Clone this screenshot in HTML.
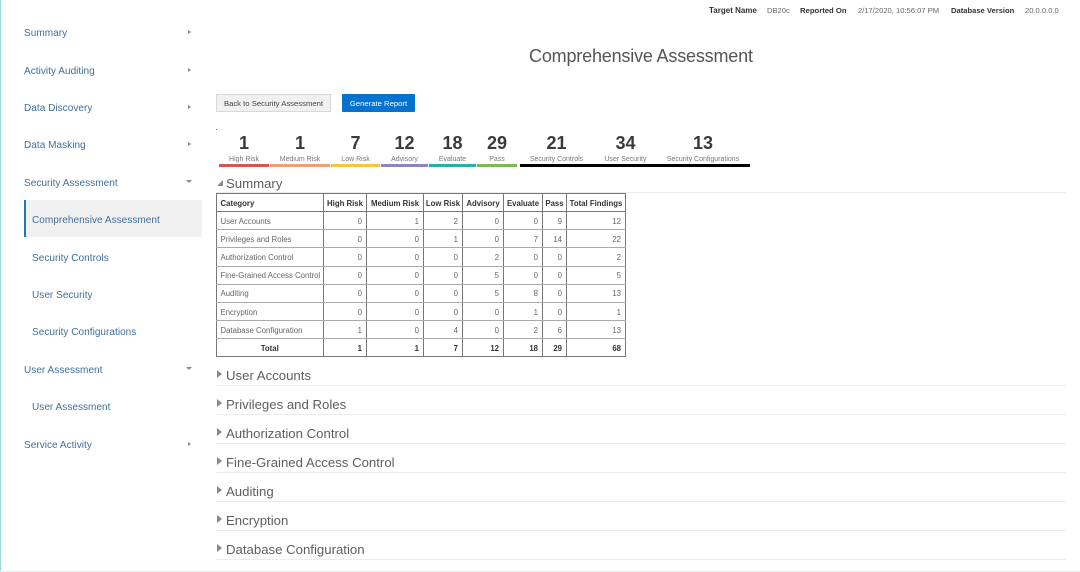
<!DOCTYPE html>
<html><head><meta charset="utf-8"><style>
html,body{margin:0;padding:0;width:1080px;height:572px;overflow:hidden;background:#fff;font-family:"Liberation Sans",sans-serif;}
.a{position:absolute;white-space:nowrap}
.nav{position:absolute;color:#3f6f9e;line-height:14px;white-space:nowrap;font-family:"Liberation Sans",sans-serif;font-size:10.05px;letter-spacing:.02px;margin-top:1px}
.ar{position:absolute;left:187.5px;width:0;height:0;margin-top:.5px;border-left:3.5px solid #888;border-top:2.5px solid transparent;border-bottom:2.5px solid transparent}
.dn{position:absolute;left:186px;width:0;height:0;border-top:3.5px solid #888;border-left:3px solid transparent;border-right:3px solid transparent}
.n{position:absolute;top:133px;font:bold 18px/20px "Liberation Sans",sans-serif;color:#3a3a3a;text-align:center}
.l{position:absolute;top:155px;font:7px/9px "Liberation Sans",sans-serif;color:#777;text-align:center;white-space:nowrap}
.b{position:absolute;top:164px;height:3px}
.h{position:absolute;left:226px;font:13.2px/18px "Liberation Sans",sans-serif;color:#5e5e5e;white-space:nowrap}
.t{position:absolute;left:217px;width:0;height:0;border-left:5px solid #888;border-top:4px solid transparent;border-bottom:4px solid transparent}
.r{position:absolute;left:216px;width:850px;height:1px;background:#ececec}
table{position:absolute;left:216px;top:193px;border-collapse:collapse;table-layout:fixed;width:409px;font:7.8px "Liberation Sans",sans-serif;color:#666}
td,th{border:1px solid #777;border-top-color:#aaa;border-bottom-color:#aaa;padding:1px 4px 0;text-align:right;height:18.17px;box-sizing:border-box;white-space:nowrap;overflow:hidden}
th{color:#333;font-weight:bold;text-align:center;padding:1px 1px 0;border-color:#777}
td:first-child,th:first-child{text-align:left;padding-left:3.5px}
tr.tot td{font-weight:bold;color:#333;border-color:#777}
tr.tot td:first-child{text-align:center}
</style></head><body>
<div class="a" style="left:0;top:0;width:1px;height:572px;background:#9adbd6"></div>
<div class="a" style="left:0;top:571px;width:1080px;height:1px;background:#e4ecec"></div>

<div class="nav" style="top:26px;left:24px">Summary</div><div class="ar" style="top:29.5px"></div>
<div class="nav" style="top:64px;left:24px">Activity Auditing</div><div class="ar" style="top:67px"></div>
<div class="nav" style="top:101px;left:24px">Data Discovery</div><div class="ar" style="top:104.5px"></div>
<div class="nav" style="top:138px;left:24px">Data Masking</div><div class="ar" style="top:141.5px"></div>
<div class="nav" style="top:176px;left:24px">Security Assessment</div><div class="dn" style="top:180px"></div>
<div class="a" style="left:24px;top:200px;width:178px;height:37px;background:#f0f0f0"></div>
<div class="a" style="left:24px;top:200px;width:2px;height:37px;background:#1b78c0"></div>
<div class="nav" style="top:213px;left:32px">Comprehensive Assessment</div>
<div class="nav" style="top:251px;left:32px">Security Controls</div>
<div class="nav" style="top:288px;left:32px">User Security</div>
<div class="nav" style="top:325px;left:32px">Security Configurations</div>
<div class="nav" style="top:363px;left:24px">User Assessment</div><div class="dn" style="top:367px"></div>
<div class="nav" style="top:400px;left:32px">User Assessment</div>
<div class="nav" style="top:438px;left:24px">Service Activity</div><div class="ar" style="top:441px"></div>

<div class="a" style="top:5px;left:709px;font:bold 8px/11px 'Liberation Sans',sans-serif;color:#333">Target Name</div>
<div class="a" style="top:5px;left:767px;font:7.6px/11px 'Liberation Sans',sans-serif;color:#666">DB20c</div>
<div class="a" style="top:5px;left:800px;font:bold 7.7px/11px 'Liberation Sans',sans-serif;color:#333">Reported On</div>
<div class="a" style="top:5px;left:858px;font:7.6px/11px 'Liberation Sans',sans-serif;color:#666">2/17/2020, 10:56:07 PM</div>
<div class="a" style="top:5px;left:951px;font:bold 7.6px/11px 'Liberation Sans',sans-serif;color:#333">Database Version</div>
<div class="a" style="top:5px;left:1025px;font:7.6px/11px 'Liberation Sans',sans-serif;color:#666">20.0.0.0.0</div>

<div class="a" style="top:44px;left:529px;font:18px/25px 'Liberation Sans',sans-serif;letter-spacing:-.18px;color:#555">Comprehensive Assessment</div>

<div class="a" style="left:216px;top:94px;width:115px;height:18px;box-sizing:border-box;background:#f1f1f1;border:1px solid #d8d8d8;font:7.7px/17px 'Liberation Sans',sans-serif;color:#444;text-align:center">Back to Security Assessment</div>
<div class="a" style="left:342px;top:94px;width:73px;height:18px;background:#0572ce;border-radius:1px;font:7.7px/19px 'Liberation Sans',sans-serif;color:#fff;text-align:center">Generate Report</div>
<div class="a" style="left:216px;top:129px;width:1px;height:1px;background:#777"></div>

<div class="n" style="left:219px;width:50px">1</div><div class="l" style="left:219px;width:50px">High Risk</div><div class="b" style="left:219px;width:50px;background:#d9534f"></div>
<div class="n" style="left:270px;width:60px">1</div><div class="l" style="left:270px;width:60px">Medium Risk</div><div class="b" style="left:270px;width:60px;background:#f0a070"></div>
<div class="n" style="left:331px;width:49px">7</div><div class="l" style="left:331px;width:49px">Low Risk</div><div class="b" style="left:331px;width:49px;background:#f5c542"></div>
<div class="n" style="left:381px;width:47px">12</div><div class="l" style="left:381px;width:47px">Advisory</div><div class="b" style="left:381px;width:47px;background:#8a84c4"></div>
<div class="n" style="left:429px;width:47px">18</div><div class="l" style="left:429px;width:47px">Evaluate</div><div class="b" style="left:429px;width:47px;background:#26b0a8"></div>
<div class="n" style="left:477px;width:40px">29</div><div class="l" style="left:477px;width:40px">Pass</div><div class="b" style="left:477px;width:40px;background:#7cb855"></div>
<div class="n" style="left:520px;width:73px">21</div><div class="l" style="left:520px;width:73px">Security Controls</div>
<div class="n" style="left:593px;width:65px">34</div><div class="l" style="left:593px;width:65px">User Security</div>
<div class="n" style="left:658px;width:90px">13</div><div class="l" style="left:658px;width:90px">Security Configurations</div>
<div class="b" style="left:520px;width:230px;background:#000"></div>

<div class="a" style="left:217px;top:180px;width:0;height:0;border-bottom:6px solid #888;border-left:6px solid transparent"></div>
<div class="h" style="top:175px">Summary</div><div class="r" style="top:192px"></div>

<table>
<colgroup><col style="width:107px"><col style="width:43px"><col style="width:57px"><col style="width:39px"><col style="width:41px"><col style="width:39px"><col style="width:24px"><col style="width:59px"></colgroup>
<tr><th>Category</th><th>High Risk</th><th>Medium Risk</th><th>Low Risk</th><th>Advisory</th><th>Evaluate</th><th>Pass</th><th>Total Findings</th></tr>
<tr><td>User Accounts</td><td>0</td><td>1</td><td>2</td><td>0</td><td>0</td><td>9</td><td>12</td></tr>
<tr><td>Privileges and Roles</td><td>0</td><td>0</td><td>1</td><td>0</td><td>7</td><td>14</td><td>22</td></tr>
<tr><td>Authorization Control</td><td>0</td><td>0</td><td>0</td><td>2</td><td>0</td><td>0</td><td>2</td></tr>
<tr><td>Fine-Grained Access Control</td><td>0</td><td>0</td><td>0</td><td>5</td><td>0</td><td>0</td><td>5</td></tr>
<tr><td>Auditing</td><td>0</td><td>0</td><td>0</td><td>5</td><td>8</td><td>0</td><td>13</td></tr>
<tr><td>Encryption</td><td>0</td><td>0</td><td>0</td><td>0</td><td>1</td><td>0</td><td>1</td></tr>
<tr><td>Database Configuration</td><td>1</td><td>0</td><td>4</td><td>0</td><td>2</td><td>6</td><td>13</td></tr>
<tr class="tot"><td>Total</td><td>1</td><td>1</td><td>7</td><td>12</td><td>18</td><td>29</td><td>68</td></tr>
</table>

<div class="t" style="top:370px"></div><div class="h" style="top:367px">User Accounts</div><div class="r" style="top:385px"></div>
<div class="t" style="top:399px"></div><div class="h" style="top:396px">Privileges and Roles</div><div class="r" style="top:414px"></div>
<div class="t" style="top:428px"></div><div class="h" style="top:425px">Authorization Control</div><div class="r" style="top:443px"></div>
<div class="t" style="top:457px"></div><div class="h" style="top:454px">Fine-Grained Access Control</div><div class="r" style="top:472px"></div>
<div class="t" style="top:486px"></div><div class="h" style="top:483px">Auditing</div><div class="r" style="top:501px"></div>
<div class="t" style="top:515px"></div><div class="h" style="top:512px">Encryption</div><div class="r" style="top:530px"></div>
<div class="t" style="top:544px"></div><div class="h" style="top:541px">Database Configuration</div><div class="r" style="top:559px"></div>
</body></html>
